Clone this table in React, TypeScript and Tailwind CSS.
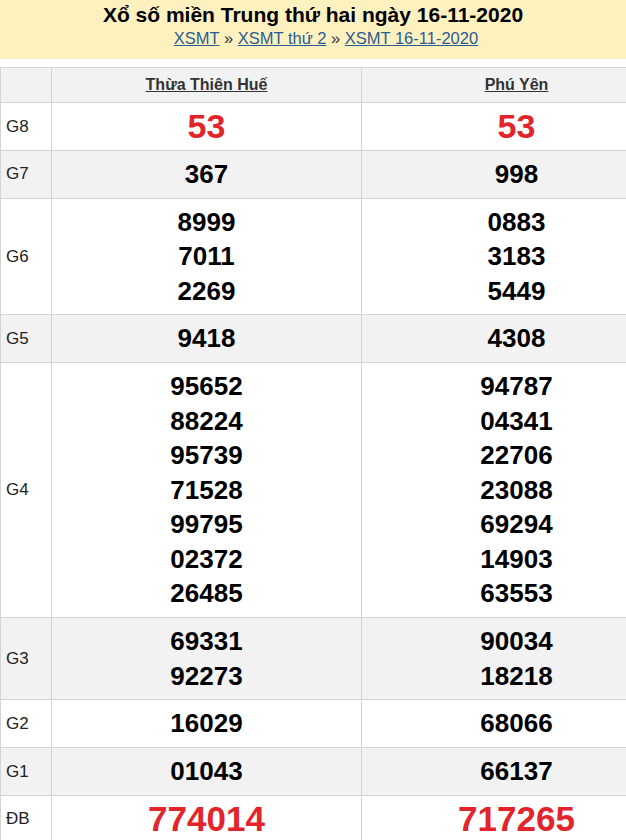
import React from "react";

type Row = { label: string; a: string[]; b: string[]; kind?: "g8" | "db" };

const rows: Row[] = [
  { label: "G8", a: ["53"], b: ["53"], kind: "g8" },
  { label: "G7", a: ["367"], b: ["998"] },
  { label: "G6", a: ["8999", "7011", "2269"], b: ["0883", "3183", "5449"] },
  { label: "G5", a: ["9418"], b: ["4308"] },
  {
    label: "G4",
    a: ["95652", "88224", "95739", "71528", "99795", "02372", "26485"],
    b: ["94787", "04341", "22706", "23088", "69294", "14903", "63553"],
  },
  { label: "G3", a: ["69331", "92273"], b: ["90034", "18218"] },
  { label: "G2", a: ["16029"], b: ["68066"] },
  { label: "G1", a: ["01043"], b: ["66137"] },
  { label: "ĐB", a: ["774014"], b: ["717265"], kind: "db" },
];

function Nums({ list, kind }: { list: string[]; kind?: "g8" | "db" }) {
  const cls =
    kind === "g8"
      ? "text-[34px] text-[#e3242b]"
      : kind === "db"
      ? "text-[35px] text-[#e3242b]"
      : "text-[26px] text-black";
  return (
    <div className={`flex flex-col items-center font-bold ${cls}`}>
      {list.map((n, i) => (
        <div key={i} className="h-[34.5px] leading-[34.5px]">
          {n}
        </div>
      ))}
    </div>
  );
}

export default function App() {
  return (
    <div
      className="w-[626px] h-[840px] overflow-hidden bg-white"
      style={{ fontFamily: '"Liberation Sans", Arial, sans-serif' }}
    >
      <div className="bg-[#fdf1c0] h-[59px] flex flex-col items-center pt-[2px]">
        <div className="text-[21px] font-bold text-black leading-[26px]">
          Xổ số miền Trung thứ hai ngày 16-11-2020
        </div>
        <div className="text-[16.5px] leading-[20px] text-[#333] ml-[26px]">
          <a className="underline text-[#2b5d91]">XSMT</a> »{" "}
          <a className="underline text-[#2b5d91]">XSMT thứ 2</a> »{" "}
          <a className="underline text-[#2b5d91]">XSMT 16-11-2020</a>
        </div>
      </div>
      <div className="h-[8px]" />
      <table className="w-[671px] border-collapse table-fixed">
        <colgroup>
          <col className="w-[51px]" />
          <col className="w-[310px]" />
          <col className="w-[310px]" />
        </colgroup>
        <thead>
          <tr className="bg-[#f2f2f2] h-[35px]">
            <th className="border border-[#d4d4d4]"></th>
            <th className="border border-[#d4d4d4] text-[16px] font-bold text-[#333] underline">
              Thừa Thiên Huế
            </th>
            <th className="border border-[#d4d4d4] text-[16px] font-bold text-[#333] underline">
              Phú Yên
            </th>
          </tr>
        </thead>
        <tbody>
          {rows.map((r, i) => (
            <tr key={r.label} className={i % 2 === 1 ? "bg-[#f2f2f2]" : "bg-white"}>
              <td className="border border-[#d4d4d4] pl-[5px] text-[17px] text-[#222] align-middle">
                {r.label}
              </td>
              <td className="border border-[#d4d4d4] py-[6.15px] align-middle">
                <Nums list={r.a} kind={r.kind} />
              </td>
              <td className="border border-[#d4d4d4] py-[6.15px] align-middle">
                <Nums list={r.b} kind={r.kind} />
              </td>
            </tr>
          ))}
        </tbody>
      </table>
    </div>
  );
}
